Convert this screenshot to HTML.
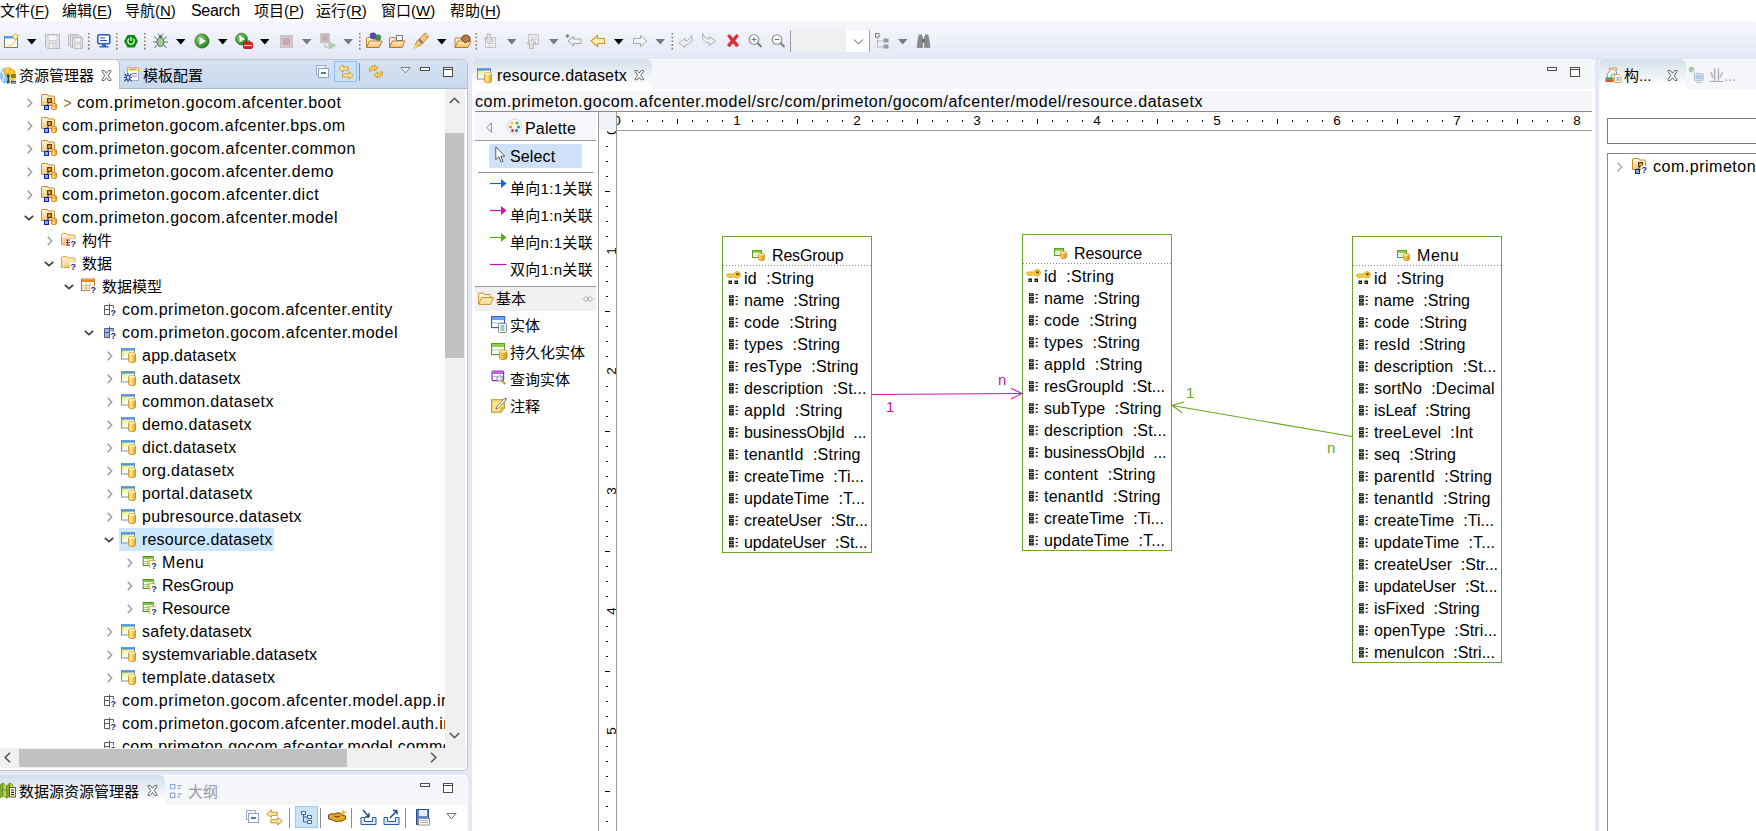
<!DOCTYPE html>
<html><head><meta charset="utf-8"><title>IDE</title>
<style>
*{box-sizing:border-box;margin:0;padding:0}
html,body{width:1756px;height:831px;overflow:hidden;background:#e4e8f6}
body{position:relative;font-family:"Liberation Sans","Noto Sans CJK SC",sans-serif;font-size:16px;letter-spacing:.5px;color:#000;line-height:23px}
.abs,.abs-c>*{position:absolute}
.cj{font-size:15px;letter-spacing:0}
svg{position:absolute;overflow:visible}
#menu{position:absolute;left:0;top:0;width:1756px;height:21px;background:#fff;white-space:nowrap}
#menu span{position:absolute;top:-1px;font-size:15px;letter-spacing:0;line-height:23px}
#menu u{text-decoration:underline;text-underline-offset:2px}
#tb{position:absolute;left:0;top:21px;width:1756px;height:39px;background:linear-gradient(#f6f7fc,#f1f3fa 30%,#e3e7f5)}
.panel{position:absolute;background:#fff;overflow:hidden}
.tree{position:absolute;overflow:hidden;background:#fff}
.tree .r{position:absolute;left:0;right:0;height:23px;white-space:nowrap;line-height:24px}
.tree .r span{position:absolute;top:0}
.tree .r .ar{top:7.300px}
.tree .r .ic{top:3px}
.tree .r .sel{position:absolute;top:0;height:23px;background:#cce8ff}
.tabtxt{position:absolute;font-size:15px;letter-spacing:0;line-height:22px;white-space:nowrap}
.ent{position:absolute;width:150px;border:1px solid #6da52a;background:#fff}
.ent span{position:absolute;white-space:pre;line-height:22px}
.ent .ea{left:21px;letter-spacing:.45px}
.ent .dot{position:absolute;left:0;right:0;top:28px;height:1px;background:repeating-linear-gradient(90deg,#8a8a8a 0 1px,transparent 1px 3px)}
.lb{position:absolute;font-size:15px;letter-spacing:0;line-height:22px}
</style></head><body>
<svg width="0" height="0" style="position:absolute"><defs>
<linearGradient id="gfold" x1="0" y1="0" x2="0" y2="1"><stop offset="0" stop-color="#fff6dc"/><stop offset="1" stop-color="#f3c878"/></linearGradient>
<linearGradient id="gcyl" x1="0" y1="0" x2="1" y2="0"><stop offset="0" stop-color="#fbd77a"/><stop offset="1" stop-color="#e08e12"/></linearGradient>
<linearGradient id="gcyl2" x1="0" y1="0" x2="1" y2="0"><stop offset="0" stop-color="#f0a020"/><stop offset=".45" stop-color="#ffeebc"/><stop offset="1" stop-color="#e08a10"/></linearGradient>
<linearGradient id="gwin" x1="0" y1="0" x2=".7" y2="1"><stop offset="0" stop-color="#c4ec3c"/><stop offset=".7" stop-color="#ffffff"/></linearGradient><linearGradient id="gcyl3" x1="0" y1="0" x2="1" y2="0"><stop offset="0" stop-color="#f8c838"/><stop offset=".35" stop-color="#fde9a0"/><stop offset="1" stop-color="#e49a08"/></linearGradient>
<symbol id="i-proj" viewBox="0 0 16 16"><path d="M.5 11.500V2Q.5 .5 2 .5H6Q7 .5 7.500 2H12.500Q13.500 2 13.500 3V11.500z" fill="url(#gfold)" stroke="#c98a2b"/><rect x="6" y="4" width="5" height="5" fill="#5a3a20"/><rect x="7.200" y="5.200" width="2.600" height="2.600" fill="#e8b030"/><path d="M7.500 9L6.500 11" stroke="#3a2a5a" stroke-width="1"/><rect x="3.500" y="11.500" width="4" height="4" fill="#7ab8d8" stroke="#1b1f9a"/><rect x="10.500" y="9.500" width="5" height="6" rx="1.500" fill="url(#gcyl2)" stroke="#d8860e" stroke-width=".9"/><path d="M10.800 11.500Q13 12.500 15.200 11.500" fill="none" stroke="#d8860e" stroke-width=".7"/></symbol>
<symbol id="i-projq" viewBox="0 0 16 16"><path d="M.5 11.500V2Q.5 .5 2 .5H6Q7 .5 7.500 2H12.500Q13.500 2 13.500 3V11.500z" fill="url(#gfold)" stroke="#c98a2b"/><rect x="6" y="4" width="5" height="5" fill="#5a3a20"/><rect x="7.200" y="5.200" width="2.600" height="2.600" fill="#e8b030"/><path d="M7.500 9L6.500 11" stroke="#3a2a5a" stroke-width="1"/><rect x="3.500" y="11.500" width="4" height="4" fill="#7ab8d8" stroke="#1b1f9a"/><rect x="9" y="7.500" width="7" height="8" fill="#fff"/><text x="9.600" y="14.600" font-family="Liberation Sans,sans-serif" font-size="9" font-weight="bold" fill="#1c1c8c" letter-spacing="0">?</text></symbol>
<symbol id="i-fq1" viewBox="0 0 16 16"><path d="M.5 12.5V3.5q0-2 2-2h3l1.5 1.5h6q1 0 1 1V12.5z" fill="url(#gfold)" stroke="#d3a24a"/><path d="M4 6.5h10v7H4z" fill="#fff8e6" stroke="#d9b56a" stroke-width=".6"/><path d="M5 8h4M5 10.5h4M6.5 8v5M5 13h4" stroke="#b01d2e" fill="none"/><rect x="9" y="7.500" width="7" height="8" fill="#fff"/><text x="9.600" y="14.600" font-family="Liberation Sans,sans-serif" font-size="9" font-weight="bold" fill="#1c1c8c" letter-spacing="0">?</text></symbol>
<symbol id="i-fq2" viewBox="0 0 16 16"><path d="M.5 12.5V3.5q0-2 2-2h3l1.5 1.5h6q1 0 1 1V12.5z" fill="url(#gfold)" stroke="#d3a24a"/><path d="M2.5 13V6.5q0-1 1-1h10.5" fill="none" stroke="#f8e2a6"/><rect x="9" y="7.500" width="7" height="8" fill="#fff"/><text x="9.600" y="14.600" font-family="Liberation Sans,sans-serif" font-size="9" font-weight="bold" fill="#1c1c8c" letter-spacing="0">?</text></symbol>
<symbol id="i-dm" viewBox="0 0 16 16"><rect x=".5" y="1" width="13" height="11.500" fill="#fffdf0" stroke="#b8863a"/><rect x="1" y="1.500" width="12" height="2.500" fill="#e08a2b"/><path d="M1 7.5h12M1 10h12M5 4.5v8M9 4.5v8" stroke="#c9a76a" stroke-width=".8" fill="none"/><rect x="9" y="7.500" width="7" height="8" fill="#fff"/><text x="9.600" y="14.600" font-family="Liberation Sans,sans-serif" font-size="9" font-weight="bold" fill="#1c1c8c" letter-spacing="0">?</text></symbol>
<symbol id="i-pk1" viewBox="0 0 16 16"><path d="M3.500 4.500h9v9h-9zM8.500 2.500V14.500M3.500 8.500h9" fill="none" stroke="#5c5c5c"/><rect x="9" y="7.500" width="7" height="8" fill="#fff"/><text x="9.600" y="14.600" font-family="Liberation Sans,sans-serif" font-size="9" font-weight="bold" fill="#1c1c8c" letter-spacing="0">?</text></symbol>
<symbol id="i-pk2" viewBox="0 0 16 16"><path d="M3.500 4.500h9v9h-9z" fill="#9fb6d8"/><path d="M3.500 4.500h9v9h-9zM8.500 2.500V14.500M3.500 8.500h9" fill="none" stroke="#4a5f86"/><rect x="9" y="7.500" width="7" height="8" fill="#fff"/><text x="9.600" y="14.600" font-family="Liberation Sans,sans-serif" font-size="9" font-weight="bold" fill="#1c1c8c" letter-spacing="0">?</text></symbol>
<symbol id="i-ds" viewBox="0 0 16 16"><rect x=".5" y="1.500" width="13" height="10.500" fill="url(#gwin)" stroke="#8e8e8e"/><rect x=".5" y="1" width="13" height="2.500" fill="#4a86d4"/><path d="M1 1.800h12" stroke="#8cc0f0" stroke-width=".7"/><rect x="7.500" y="5.500" width="7" height="10" rx="2" fill="url(#gcyl3)" stroke="#c88a14" stroke-width=".8"/><ellipse cx="11" cy="6.800" rx="3.200" ry="1.200" fill="#fdeeb4"/></symbol>
<symbol id="i-en" viewBox="-.7 0 16 16"><rect x="1.5" y="2.5" width="10" height="9" fill="#fbfff0" stroke="#4b8a1f"/><rect x="2" y="3" width="9" height="2" fill="#7cc142"/><path d="M2 7.5h9M2 9.5h9M6 5v6" stroke="#8bbf5a" stroke-width=".8" fill="none"/><path d="M7.500 6.500H13.500V13H7.500z" fill="#fdeeb8" stroke="#d8a030" stroke-width=".8"/><rect x="9" y="7.500" width="7" height="8" fill="#fff"/><text x="9.600" y="14.600" font-family="Liberation Sans,sans-serif" font-size="9" font-weight="bold" fill="#1c1c8c" letter-spacing="0">?</text></symbol>
<symbol id="i-x" viewBox="0 0 10 10"><path d="M1 .5L3 .5L5 3L7 .5L9 .5L9 1.5L6.5 5L9 8.5L9 9.5L7 9.5L5 7L3 9.5L1 9.5L1 8.5L3.5 5L1 1.5z" fill="#fff" stroke="#5a5a5a" stroke-width=".9"/></symbol>
<symbol id="i-min" viewBox="0 0 10 4"><rect x=".5" y=".5" width="9" height="3" fill="#fff" stroke="#4a4a4a"/></symbol>
<symbol id="i-max" viewBox="0 0 10 10"><rect x=".5" y=".5" width="9" height="9" fill="#fff" stroke="#4a4a4a"/><path d="M.5 2.5h9" stroke="#4a4a4a"/></symbol>
<symbol id="i-pent" viewBox="0 0 13 11"><rect x=".5" y=".5" width="9" height="7" fill="#fbfff2" stroke="#5aa02a"/><rect x="1" y="1" width="8" height="2" fill="#8fd04a"/><path d="M1 5h8" stroke="#b3dc8c" stroke-width=".8"/><rect x="6.500" y="3.500" width="6" height="7" rx="2" fill="url(#gcyl)" stroke="#d08a12" stroke-width=".8"/><ellipse cx="9.500" cy="4.800" rx="2.500" ry="1" fill="#fde7a6"/></symbol>
<symbol id="i-attr" viewBox="0 0 10 11"><path d="M0 .2h4.800v3h-4.800zM0 3.900h4.800v3h-4.800zM0 7.600h4.800v3h-4.800z" fill="#161616"/><path d="M1.400 1.200h2v1h-2zM1.400 4.900h2v1h-2zM1.400 8.600h2v1h-2z" fill="#8ad86a"/><path d="M6.600 1.700h2.200M6.600 5.400h2.200M6.600 9.100h2.200" stroke="#161616" stroke-width="1.200"/></symbol>
<symbol id="i-key" viewBox="0 0 15 14"><path d="M.5 4.500Q.5 3 2 3H8Q8.500 .5 11.500 .5Q14.500 1 14.500 4Q14 7 11 7Q9 7 8.300 5.800H6.500L5.500 7L4.500 5.800L3.500 7L2 5.800Q.5 5.800 .5 4.500z" fill="#f5d23a" stroke="#c9a01a" stroke-width=".8"/><circle cx="11.500" cy="3.300" r="1.300" fill="#7a4a12"/><path d="M2.500 9.500h3.500v3.500h-3.500zM8.500 9.500h3.500v3.500h-3.500z" fill="#1a1a1a"/><path d="M3.500 11h1.500v1h-1.500zM9.500 11h1.500v1h-1.500z" fill="#7ac85a"/></symbol>
</defs></svg>

<div id="menu">
<span style="left:0">文件(<u>F</u>)</span><span style="left:62px">编辑(<u>E</u>)</span><span style="left:125px">导航(<u>N</u>)</span><span style="left:191px;font-size:16px;letter-spacing:-.3px">Search</span><span style="left:254px">项目(<u>P</u>)</span><span style="left:316px">运行(<u>R</u>)</span><span style="left:381px">窗口(<u>W</u>)</span><span style="left:450px">帮助(<u>H</u>)</span>
</div>
<div id="tb">
<svg style="left:0;top:0" width="1000" height="39" viewBox="0 21 1000 39">
<defs>
<g id="dd"><path d="M0 0h9.500L4.750 5.500z"/></g>
<g id="sep"><path d="M0 0h1.600v1.600H0zM0 3.700h1.600v1.600H0zM0 7.400h1.600v1.600H0zM0 11.100h1.600v1.600H0zM0 14.800h1.600v1.600H0z" fill="#8a7a5c"/></g>
<radialGradient id="gplay" cx=".35" cy=".3" r=".8"><stop offset="0" stop-color="#8ad06a"/><stop offset="1" stop-color="#1f7a1f"/></radialGradient>
<linearGradient id="gof" x1="0" y1="0" x2="0" y2="1"><stop offset="0" stop-color="#fdf0c8"/><stop offset="1" stop-color="#f0c070"/></linearGradient>
</defs>
<!-- new -->
<rect x="4.500" y="36.500" width="13" height="11" fill="#fcfdff" stroke="#8a7a5a"/><rect x="4.500" y="36" width="13" height="2.500" fill="#5a9ae8"/><path d="M7 46Q14 46 16 39" fill="none" stroke="#f4dc9a" stroke-width="1.500"/><path d="M15.500 33.500L17 35.500L19 36L17 37.500L15.500 40L14 37.500L12 36L14 35.500z" fill="#fdf6c8" stroke="#d8a828" stroke-width=".9"/>
<use href="#dd" x="27" y="39" fill="#000"/>
<!-- save -->
<path d="M45.500 34.500H59.500V48.500H47.500L45.500 46.500z" fill="#e4e4e4" stroke="#b8b8b8"/><rect x="48" y="35" width="9" height="5.500" fill="#f4f4f4" stroke="#c4c4c4" stroke-width=".7"/><rect x="49" y="43" width="7" height="5.500" fill="#eee" stroke="#bcbcbc" stroke-width=".8"/><path d="M53 44.500v3" stroke="#bcbcbc"/>
<!-- save all -->
<path d="M68.500 34.500H78.500V45.500H68.500z" fill="#e8e8e8" stroke="#bcbcbc"/><path d="M70.500 36H80.500V47H70.500z" fill="#e8e8e8" stroke="#bcbcbc"/><path d="M72.500 37.500H82.500V48.500H74L72.500 47z" fill="#e4e4e4" stroke="#b8b8b8"/><rect x="74.500" y="38" width="6" height="4" fill="#f4f4f4" stroke="#c4c4c4" stroke-width=".7"/><rect x="75" y="44" width="5.500" height="4.500" fill="#eee" stroke="#bcbcbc" stroke-width=".8"/>
<use href="#sep" x="88" y="33"/>
<!-- monitor -->
<rect x="97.800" y="34.800" width="12" height="9" rx="1.500" fill="#fff" stroke="#2a5ab8" stroke-width="1.600"/><path d="M100 38h5M100 40.500h7" stroke="#2a5ab8" stroke-width="1.200"/><path d="M102 44.500h4v1.500h-4z" fill="#2a5ab8"/><path d="M99.500 46.800h9" stroke="#2a5ab8" stroke-width="1.400"/>
<use href="#sep" x="116" y="33"/>
<!-- power -->
<path d="M127.500 35L134.500 35L138 41.200L134.500 47.500L127.500 47.500L124 41.200z" fill="#0f8a0f"/><path d="M128.800 38.800A3.200 3.200 0 1 0 133.200 38.800" fill="none" stroke="#fff" stroke-width="1.200"/><path d="M131 37v4" stroke="#fff" stroke-width="1.200"/>
<use href="#sep" x="144" y="33"/>
<!-- bug -->
<ellipse cx="160.500" cy="42" rx="3.300" ry="4.500" fill="#a8c89a" stroke="#3a6a5a" stroke-width=".9"/><circle cx="160.500" cy="36.800" r="1.800" fill="#4a7a6a"/><path d="M157.500 39.500L154 36.500M163.500 39.500L167 36.500M157 42H153M164 42H168M157.500 44.500L154.500 48M163.500 44.500L166.500 48M159.500 35.500L158 33.500M161.500 35.500L163 33.500" stroke="#3a6a5a" stroke-width=".9" fill="none"/>
<use href="#dd" x="176" y="39" fill="#000"/>
<!-- run -->
<circle cx="202" cy="41" r="7" fill="url(#gplay)" stroke="#1f6a1f" stroke-width=".8"/><path d="M199.500 37L206 41L199.500 45z" fill="#fff"/>
<use href="#dd" x="218" y="39" fill="#000"/>
<!-- run ext -->
<circle cx="241.500" cy="39" r="5.800" fill="url(#gplay)" stroke="#1f6a1f" stroke-width=".8"/><path d="M239.500 35.500L245 39L239.500 42.500z" fill="#fff"/><rect x="243.500" y="42.500" width="9" height="6" rx="1" fill="#e0241a" stroke="#a01208" stroke-width=".8"/><path d="M246 42.500v-1.500h4v1.500" fill="none" stroke="#a01208"/><path d="M244 45.500h8" stroke="#fff" stroke-width=".8"/>
<use href="#dd" x="260" y="39" fill="#000"/>
<!-- stop gray -->
<rect x="280.500" y="35.500" width="12" height="12" fill="#d8c4c8" stroke="#c4c4c4"/><rect x="283" y="38" width="7" height="7" fill="#c8a8b0"/>
<use href="#dd" x="302" y="39" fill="#7a7a7a"/>
<!-- gray icon -->
<rect x="320.500" y="33.500" width="9" height="9" fill="#d4bcc4" stroke="#c4c4c4"/><rect x="322.500" y="35.500" width="5" height="5" fill="#c8a8b0"/><path d="M329 42L335.500 45.500L329 49z" fill="#b4d0b4" stroke="#a8bca8" stroke-width=".7"/><path d="M325 43v4h3" fill="none" stroke="#bcbcbc"/>
<use href="#dd" x="343.500" y="39" fill="#7a7a7a"/>
<use href="#sep" x="359" y="33"/>
<!-- open folder 1 -->
<path d="M366.500 47.500V38.500q0-1 1-1h4l1 1.500h6q1 0 1 1V41" fill="#fdf0c8" stroke="#b8782a"/><path d="M366.500 47.500L369.500 41H382L379 47.500z" fill="url(#gof)" stroke="#b8782a"/><circle cx="373" cy="35.800" r="3" fill="#5a4ab8" stroke="#3a2a8a" stroke-width=".6"/><circle cx="378" cy="37.500" r="2.800" fill="#3a9a4a" stroke="#1a6a2a" stroke-width=".6"/>
<!-- open folder 2 -->
<path d="M389.500 47.500V38.500q0-1 1-1h4l1 1.500h6q1 0 1 1V41" fill="#fdf0c8" stroke="#b8782a"/><rect x="396.500" y="35.500" width="6" height="5" fill="#fff" stroke="#6a7aa8"/><path d="M389.500 47.500L392.500 41H405L402 47.500z" fill="url(#gof)" stroke="#b8782a"/>
<!-- pen -->
<path d="M414 48L417 41L424 34L428 37.500L421 45z" fill="#f4c878" stroke="#b8782a" stroke-width=".8"/><path d="M419 39.500L422.500 43" stroke="#7a7a8a" stroke-width="2.400"/><path d="M413.500 48.500L415 45L417.500 47z" fill="#fdf4a8" stroke="#e8d048" stroke-width=".8"/><path d="M424 34L426 33L428.500 35.500L428 37.500z" fill="#fdf0c8" stroke="#b8782a" stroke-width=".7"/>
<use href="#dd" x="437" y="39" fill="#000"/>
<!-- folder brown -->
<path d="M455 47.500V39q0-1 1-1h4l1 1.500h7q1 0 1 1V41" fill="#fdf0c8" stroke="#b8782a"/><path d="M455 47.500L458 41H471L468 47.500z" fill="url(#gof)" stroke="#b8782a"/><path d="M461 39Q462 34.500 467 35Q471 36 470 40.500L465 43z" fill="#a86a3a" stroke="#6a3a1a" stroke-width=".7"/><path d="M463 39L468 37M464 41L469 39" stroke="#d8a878" stroke-width=".7"/>
<use href="#sep" x="475.500" y="33"/>
<!-- gray down doc -->
<rect x="485.500" y="37.500" width="10" height="10" fill="#eee" stroke="#c4c4c4"/><path d="M488 41h6M488 43.500h6M488 46h4" stroke="#c8c8c8" stroke-width=".9"/><path d="M487 34v5h-2.500L489 44L493 39H490.500V34z" fill="#e0e0e0" stroke="#b0b0b0" stroke-width=".8"/>
<use href="#dd" x="507" y="39" fill="#7a7a7a"/>
<rect x="528.500" y="34.500" width="10" height="10" fill="#eee" stroke="#c4c4c4"/><path d="M531 37h6M531 39.500h6M531 42h4" stroke="#c8c8c8" stroke-width=".9"/><path d="M529.500 48.500v-5H527L531.500 38.500L536 43.500H533.500V48.500z" fill="#e0e0e0" stroke="#b0b0b0" stroke-width=".8"/>
<use href="#dd" x="549" y="39" fill="#7a7a7a"/>
<!-- last edit -->
<path d="M568 41L573.500 36.500V39H581V43.500H573.500V46z" fill="#f0f0f0" stroke="#9a9a9a" stroke-width=".9"/><path d="M566 34.500l3 3M569 34.500l-3 3M567.500 34v4M565.500 36h4" stroke="#6a6a6a" stroke-width=".7"/>
<!-- back -->
<path d="M591 41L597.500 35.500V38.500H604.500V43.500H597.500V46.500z" fill="#fdf0b8" stroke="#d8981a" stroke-width="1.100"/>
<use href="#dd" x="614" y="39" fill="#000"/>
<path d="M647 41L640.500 35.500V38.500H633.500V43.500H640.500V46.500z" fill="#f4f4f4" stroke="#a8a8a8" stroke-width="1"/>
<use href="#dd" x="655.500" y="39" fill="#7a7a7a"/>
<use href="#sep" x="671.500" y="33"/>
<!-- undo/redo gray -->
<path d="M679 43L685 38.500V41Q690.500 40.500 691.500 35Q694.500 43.500 685 45V47.500z" fill="#f0f0f0" stroke="#a8a8a8" stroke-width=".9"/>
<path d="M715.500 41L709.500 36.500V39Q704 38.500 703 33.500Q700 41.500 709.500 43V45.500z" fill="#f0f0f0" stroke="#a8a8a8" stroke-width=".9"/>
<!-- red X -->
<path d="M727.500 36L729.500 34.500L733 38.500L736.500 34.500L738.500 36L735 40.500L738.500 45L736.500 47L733 43L729.500 47L727.500 45L731 40.500z" fill="#e03038" stroke="#c8202a" stroke-width=".7"/>
<!-- zoom in/out -->
<circle cx="754" cy="39.500" r="4.800" fill="#fff" stroke="#8a8a8a" stroke-width="1.100"/><path d="M751.500 39.500h5M754 37v5" stroke="#6a6a6a" stroke-width=".9"/><path d="M757.500 43L761.500 47" stroke="#7a7a7a" stroke-width="1.800"/>
<circle cx="777" cy="39.500" r="4.800" fill="#fff" stroke="#8a8a8a" stroke-width="1.100"/><path d="M774.500 39.500h5" stroke="#6a6a6a" stroke-width=".9"/><path d="M780.500 43L784.500 47" stroke="#7a7a7a" stroke-width="1.800"/>
<path d="M790.500 30V52M869.500 30V52" stroke="#a0a0a0"/>
<rect x="792" y="30" width="54" height="22" fill="#f0f0f0"/><rect x="846" y="30" width="23" height="22" fill="#fff"/><path d="M854 39.500L858.500 44L863 39.500" fill="none" stroke="#5a5a5a" stroke-width="1"/>
<!-- tree layout -->
<rect x="875.500" y="33.500" width="3.500" height="3.500" fill="#fff" stroke="#7a7a7a"/><path d="M877.500 38v9M877.500 41h6M877.500 47h6" fill="none" stroke="#8a8a8a" stroke-dasharray="1 1"/><rect x="883.500" y="38.500" width="5" height="4" fill="#9a9a9a"/><rect x="883.500" y="44.500" width="5" height="4" fill="#9a9a9a"/>
<use href="#dd" x="898" y="39" fill="#7a7a7a"/>
<!-- binoculars -->
<path d="M918.500 36.500h3.500v-2h-3zM925 36.500h3.500l-.5-2h-3z" fill="#8a8a8a"/><path d="M917 47.500L918.500 36.500H922.500V47.500zM930 47.500L928.500 36.500H924.500V47.500z" fill="#8a8a8a" stroke="#7a7a7a" stroke-width=".6"/><rect x="922" y="39" width="3" height="3.500" fill="#6a6a6a"/>
</svg>


</div>
<div class="panel" style="left:0;top:59px;width:468px;height:712px;border-radius:0 6px 5px 0;border:1px solid #c2c4c8;border-left:0;background:#fff">
 <div class="abs" style="left:0;top:0;width:467px;height:29px;background:linear-gradient(#d6e2f2,#c9d9ed);border-bottom:1px solid #a9b9d3"></div>
 <div class="abs" style="left:0;top:0;width:120px;height:30px;background:#fff;border-radius:0 5px 0 0;border-right:1px solid #b7c3d8"></div>
 <svg style="left:0;top:7px" width="16" height="17" viewBox="0 0 16 17"><defs><radialGradient id="gorb" cx=".4" cy=".35" r=".7"><stop offset="0" stop-color="#ffe24a"/><stop offset="1" stop-color="#f08a0a"/></radialGradient></defs><ellipse cx="5.500" cy="8.500" rx="5.500" ry="8" fill="#8cc4ee"/><path d="M2 4Q5 8 3 14" fill="none" stroke="#dceefb" stroke-width="1.600"/><circle cx="8.500" cy="4.800" r="4.600" fill="url(#gorb)"/><circle cx="11.800" cy="6" r="3.600" fill="url(#gorb)"/><rect x="9.500" y="6.500" width="6" height="6.500" fill="#fbd21a"/><path d="M11 13L10 16L13 14z" fill="#f07a1a"/><rect x="7" y="7.500" width="2.600" height="2.600" fill="#1a3466"/><rect x="7.800" y="8.300" width="1" height="1" fill="#3a8ad8"/><path d="M8.300 10v4" stroke="#14284a" stroke-width="1.100"/><rect x="7" y="13.800" width="2.600" height="2.600" fill="#2a3a3a"/><rect x="7.800" y="14.600" width="1" height="1" fill="#4ab84a"/><path d="M11 8h5M11 10h5M11 14.300h5M11 16h5" stroke="#14284a" stroke-width="1"/></svg>
 <span class="tabtxt" style="left:19px;top:5px">资源管理器</span>
 <svg style="left:101px;top:9.500px" width="11" height="11"><use href="#i-x"/></svg>
 <svg style="left:124px;top:6px" width="16" height="17" viewBox="0 0 16 17"><rect x="3.500" y="1.500" width="11" height="13" fill="#fdfdff" stroke="#a8b0c8"/><path d="M3.500 5V1.500H14.500V5" fill="#fbe9a0" stroke="#e0b040"/><path d="M5.500 3.300h7" stroke="#8a86c8" stroke-width="1"/><path d="M8 7.500h5M8 10h5" stroke="#6a76c9" stroke-width=".9"/><path d="M.5 8l7 7M7.500 8l-7 7M4 7v9M0 11.500h8" stroke="#1f3a8a" stroke-width="1.100"/><circle cx="4" cy="11.500" r="1.200" fill="#fff"/></svg>
 <span class="tabtxt" style="left:143px;top:5px">模板配置</span>
 <!-- header toolbar -->
 <svg style="left:316px;top:5px" width="14" height="14" viewBox="0 0 14 14"><rect x=".5" y=".5" width="9" height="9" fill="#f4f7fc" stroke="#9db0cc"/><rect x="2.5" y="3.5" width="10" height="9" fill="#fff" stroke="#8fa3c2"/><path d="M5 8h5" stroke="#1d4f9a" stroke-width="1.4"/></svg>
 <div class="abs" style="left:334px;top:1px;width:23px;height:21px;background:#cbe3fa;border:1px solid #8ec0f2"></div>
 <svg style="left:338px;top:4px" width="16" height="16" viewBox="0 0 16 16"><path d="M.8 4.5L5 .8V3h5.5v3H5v2.2z" fill="#fde9a6" stroke="#c8901c" stroke-width=".9"/><path d="M15.2 11.5L11 7.8V10H4.5v3H11v2.2z" fill="#fde9a6" stroke="#c8901c" stroke-width=".9"/></svg>
 <div class="abs" style="left:359px;top:3px;width:1px;height:18px;background:#8e8e8e"></div>
 <svg style="left:368px;top:4px" width="16" height="16" viewBox="0 0 16 16"><path d="M1 6.5Q2 1.5 6.5 2.5V1l3.5 3-3.5 3V5Q3.5 4.5 3 7.5z" fill="#fbd55c" stroke="#c58a12" stroke-width=".8"/><path d="M15 8.5Q14 13.5 9.500 12.5V14L6 11l3.500-3v2Q12.500 10.500 13 7.500z" fill="#fbd55c" stroke="#c58a12" stroke-width=".8"/></svg>
 <svg style="left:400px;top:7px" width="11" height="7" viewBox="0 0 11 7"><path d="M.8 .5h9.400L5.500 5.800z" fill="#fff" stroke="#6a6a6a" stroke-width=".9"/></svg>
 <svg style="left:420px;top:7px" width="10" height="4"><use href="#i-min"/></svg>
 <svg style="left:443px;top:7px" width="10" height="10"><use href="#i-max"/></svg>
 <!-- tree -->
 <div class="tree" style="left:0;top:29px;width:445px;height:659px">
<div class="r" style="top:2px"><svg class="ar" style="left:26.5px" width="6" height="10" viewBox="0 0 6 10"><path d="M.8 .8 L4.600 5 L.8 9.200" fill="none" stroke="#a0a0a0" stroke-width="1.600"/></svg><svg class="ic" style="left:41px" width="16" height="16"><use href="#i-proj"/></svg><span style="left:63.5px;color:#8a6a2c;font-size:14px">&gt;</span><span style="left:77px;letter-spacing:0.569px">com.primeton.gocom.afcenter.boot</span></div>
<div class="r" style="top:25px"><svg class="ar" style="left:26.5px" width="6" height="10" viewBox="0 0 6 10"><path d="M.8 .8 L4.600 5 L.8 9.200" fill="none" stroke="#a0a0a0" stroke-width="1.600"/></svg><svg class="ic" style="left:41px" width="16" height="16"><use href="#i-proj"/></svg><span style="left:62px;letter-spacing:0.47px">com.primeton.gocom.afcenter.bps.om</span></div>
<div class="r" style="top:48px"><svg class="ar" style="left:26.5px" width="6" height="10" viewBox="0 0 6 10"><path d="M.8 .8 L4.600 5 L.8 9.200" fill="none" stroke="#a0a0a0" stroke-width="1.600"/></svg><svg class="ic" style="left:41px" width="16" height="16"><use href="#i-proj"/></svg><span style="left:62px;letter-spacing:0.51px">com.primeton.gocom.afcenter.common</span></div>
<div class="r" style="top:71px"><svg class="ar" style="left:26.5px" width="6" height="10" viewBox="0 0 6 10"><path d="M.8 .8 L4.600 5 L.8 9.200" fill="none" stroke="#a0a0a0" stroke-width="1.600"/></svg><svg class="ic" style="left:41px" width="16" height="16"><use href="#i-proj"/></svg><span style="left:62px;letter-spacing:0.521px">com.primeton.gocom.afcenter.demo</span></div>
<div class="r" style="top:94px"><svg class="ar" style="left:26.5px" width="6" height="10" viewBox="0 0 6 10"><path d="M.8 .8 L4.600 5 L.8 9.200" fill="none" stroke="#a0a0a0" stroke-width="1.600"/></svg><svg class="ic" style="left:41px" width="16" height="16"><use href="#i-proj"/></svg><span style="left:62px;letter-spacing:0.535px">com.primeton.gocom.afcenter.dict</span></div>
<div class="r" style="top:117px"><svg class="ar" style="left:24px;top:9.300px" width="10" height="6" viewBox="0 0 10 6"><path d="M.8 .8 L5 4.600 L9.200 .8" fill="none" stroke="#3c3c3c" stroke-width="1.600"/></svg><svg class="ic" style="left:41px" width="16" height="16"><use href="#i-proj"/></svg><span style="left:62px;letter-spacing:0.522px">com.primeton.gocom.afcenter.model</span></div>
<div class="r" style="top:140px"><svg class="ar" style="left:46.5px" width="6" height="10" viewBox="0 0 6 10"><path d="M.8 .8 L4.600 5 L.8 9.200" fill="none" stroke="#a0a0a0" stroke-width="1.600"/></svg><svg class="ic" style="left:61px" width="16" height="16"><use href="#i-fq1"/></svg><span class="cj" style="left:82px">构件</span></div>
<div class="r" style="top:163px"><svg class="ar" style="left:44px;top:9.300px" width="10" height="6" viewBox="0 0 10 6"><path d="M.8 .8 L5 4.600 L9.200 .8" fill="none" stroke="#3c3c3c" stroke-width="1.600"/></svg><svg class="ic" style="left:61px" width="16" height="16"><use href="#i-fq2"/></svg><span class="cj" style="left:82px">数据</span></div>
<div class="r" style="top:186px"><svg class="ar" style="left:64px;top:9.300px" width="10" height="6" viewBox="0 0 10 6"><path d="M.8 .8 L5 4.600 L9.200 .8" fill="none" stroke="#3c3c3c" stroke-width="1.600"/></svg><svg class="ic" style="left:81px" width="16" height="16"><use href="#i-dm"/></svg><span class="cj" style="left:102px">数据模型</span></div>
<div class="r" style="top:209px"><svg class="ic" style="left:101px" width="16" height="16"><use href="#i-pk1"/></svg><span style="left:122px;letter-spacing:0.507px">com.primeton.gocom.afcenter.entity</span></div>
<div class="r" style="top:232px"><svg class="ar" style="left:84px;top:9.300px" width="10" height="6" viewBox="0 0 10 6"><path d="M.8 .8 L5 4.600 L9.200 .8" fill="none" stroke="#3c3c3c" stroke-width="1.600"/></svg><svg class="ic" style="left:101px" width="16" height="16"><use href="#i-pk2"/></svg><span style="left:122px;letter-spacing:0.522px">com.primeton.gocom.afcenter.model</span></div>
<div class="r" style="top:255px"><svg class="ar" style="left:106.5px" width="6" height="10" viewBox="0 0 6 10"><path d="M.8 .8 L4.600 5 L.8 9.200" fill="none" stroke="#a0a0a0" stroke-width="1.600"/></svg><svg class="ic" style="left:121px" width="16" height="16"><use href="#i-ds"/></svg><span style="left:142px;letter-spacing:0.234px">app.datasetx</span></div>
<div class="r" style="top:278px"><svg class="ar" style="left:106.5px" width="6" height="10" viewBox="0 0 6 10"><path d="M.8 .8 L4.600 5 L.8 9.200" fill="none" stroke="#a0a0a0" stroke-width="1.600"/></svg><svg class="ic" style="left:121px" width="16" height="16"><use href="#i-ds"/></svg><span style="left:142px;letter-spacing:0.21px">auth.datasetx</span></div>
<div class="r" style="top:301px"><svg class="ar" style="left:106.5px" width="6" height="10" viewBox="0 0 6 10"><path d="M.8 .8 L4.600 5 L.8 9.200" fill="none" stroke="#a0a0a0" stroke-width="1.600"/></svg><svg class="ic" style="left:121px" width="16" height="16"><use href="#i-ds"/></svg><span style="left:142px;letter-spacing:0.366px">common.datasetx</span></div>
<div class="r" style="top:324px"><svg class="ar" style="left:106.5px" width="6" height="10" viewBox="0 0 6 10"><path d="M.8 .8 L4.600 5 L.8 9.200" fill="none" stroke="#a0a0a0" stroke-width="1.600"/></svg><svg class="ic" style="left:121px" width="16" height="16"><use href="#i-ds"/></svg><span style="left:142px;letter-spacing:0.387px">demo.datasetx</span></div>
<div class="r" style="top:347px"><svg class="ar" style="left:106.5px" width="6" height="10" viewBox="0 0 6 10"><path d="M.8 .8 L4.600 5 L.8 9.200" fill="none" stroke="#a0a0a0" stroke-width="1.600"/></svg><svg class="ic" style="left:121px" width="16" height="16"><use href="#i-ds"/></svg><span style="left:142px;letter-spacing:0.364px">dict.datasetx</span></div>
<div class="r" style="top:370px"><svg class="ar" style="left:106.5px" width="6" height="10" viewBox="0 0 6 10"><path d="M.8 .8 L4.600 5 L.8 9.200" fill="none" stroke="#a0a0a0" stroke-width="1.600"/></svg><svg class="ic" style="left:121px" width="16" height="16"><use href="#i-ds"/></svg><span style="left:142px;letter-spacing:0.385px">org.datasetx</span></div>
<div class="r" style="top:393px"><svg class="ar" style="left:106.5px" width="6" height="10" viewBox="0 0 6 10"><path d="M.8 .8 L4.600 5 L.8 9.200" fill="none" stroke="#a0a0a0" stroke-width="1.600"/></svg><svg class="ic" style="left:121px" width="16" height="16"><use href="#i-ds"/></svg><span style="left:142px;letter-spacing:0.396px">portal.datasetx</span></div>
<div class="r" style="top:416px"><svg class="ar" style="left:106.5px" width="6" height="10" viewBox="0 0 6 10"><path d="M.8 .8 L4.600 5 L.8 9.200" fill="none" stroke="#a0a0a0" stroke-width="1.600"/></svg><svg class="ic" style="left:121px" width="16" height="16"><use href="#i-ds"/></svg><span style="left:142px;letter-spacing:0.301px">pubresource.datasetx</span></div>
<div class="r" style="top:439px"><i class="sel" style="left:119px;width:155px"></i><svg class="ar" style="left:104px;top:9.300px" width="10" height="6" viewBox="0 0 10 6"><path d="M.8 .8 L5 4.600 L9.200 .8" fill="none" stroke="#3c3c3c" stroke-width="1.600"/></svg><svg class="ic" style="left:121px" width="16" height="16"><use href="#i-ds"/></svg><span style="left:142px;letter-spacing:0.188px">resource.datasetx</span></div>
<div class="r" style="top:462px"><svg class="ar" style="left:126.5px" width="6" height="10" viewBox="0 0 6 10"><path d="M.8 .8 L4.600 5 L.8 9.200" fill="none" stroke="#a0a0a0" stroke-width="1.600"/></svg><svg class="ic" style="left:141px" width="16" height="16"><use href="#i-en"/></svg><span style="left:162px;letter-spacing:0.556px">Menu</span></div>
<div class="r" style="top:485px"><svg class="ar" style="left:126.5px" width="6" height="10" viewBox="0 0 6 10"><path d="M.8 .8 L4.600 5 L.8 9.200" fill="none" stroke="#a0a0a0" stroke-width="1.600"/></svg><svg class="ic" style="left:141px" width="16" height="16"><use href="#i-en"/></svg><span style="left:162px;letter-spacing:-0.175px">ResGroup</span></div>
<div class="r" style="top:508px"><svg class="ar" style="left:126.5px" width="6" height="10" viewBox="0 0 6 10"><path d="M.8 .8 L4.600 5 L.8 9.200" fill="none" stroke="#a0a0a0" stroke-width="1.600"/></svg><svg class="ic" style="left:141px" width="16" height="16"><use href="#i-en"/></svg><span style="left:162px;letter-spacing:-0.041px">Resource</span></div>
<div class="r" style="top:531px"><svg class="ar" style="left:106.5px" width="6" height="10" viewBox="0 0 6 10"><path d="M.8 .8 L4.600 5 L.8 9.200" fill="none" stroke="#a0a0a0" stroke-width="1.600"/></svg><svg class="ic" style="left:121px" width="16" height="16"><use href="#i-ds"/></svg><span style="left:142px;letter-spacing:0.24px">safety.datasetx</span></div>
<div class="r" style="top:554px"><svg class="ar" style="left:106.5px" width="6" height="10" viewBox="0 0 6 10"><path d="M.8 .8 L4.600 5 L.8 9.200" fill="none" stroke="#a0a0a0" stroke-width="1.600"/></svg><svg class="ic" style="left:121px" width="16" height="16"><use href="#i-ds"/></svg><span style="left:142px;letter-spacing:0.153px">systemvariable.datasetx</span></div>
<div class="r" style="top:577px"><svg class="ar" style="left:106.5px" width="6" height="10" viewBox="0 0 6 10"><path d="M.8 .8 L4.600 5 L.8 9.200" fill="none" stroke="#a0a0a0" stroke-width="1.600"/></svg><svg class="ic" style="left:121px" width="16" height="16"><use href="#i-ds"/></svg><span style="left:142px;letter-spacing:0.419px">template.datasetx</span></div>
<div class="r" style="top:600px"><svg class="ic" style="left:101px" width="16" height="16"><use href="#i-pk1"/></svg><span style="left:122px;letter-spacing:0.543px">com.primeton.gocom.afcenter.model.app.impl</span></div>
<div class="r" style="top:623px"><svg class="ic" style="left:101px" width="16" height="16"><use href="#i-pk1"/></svg><span style="left:122px;letter-spacing:0.472px">com.primeton.gocom.afcenter.model.auth.impl</span></div>
<div class="r" style="top:646px"><svg class="ic" style="left:101px" width="16" height="16"><use href="#i-pk1"/></svg><span style="left:122px;letter-spacing:0.369px">com.primeton.gocom.afcenter.model.common</span></div>
 </div>
 <!-- v scrollbar -->
 <div class="abs" style="left:445px;top:29px;width:20px;height:659px;background:#f0f0f0"></div>
 <div class="abs" style="left:445px;top:73px;width:19px;height:225px;background:#c1c1c1"></div>
 <svg style="left:449px;top:37px" width="11" height="7" viewBox="0 0 11 7"><path d="M.8 6L5.500 1.200L10.200 6" fill="none" stroke="#505050" stroke-width="1.500"/></svg>
 <svg style="left:449px;top:672px" width="11" height="7" viewBox="0 0 11 7"><path d="M.8 1L5.500 5.800L10.200 1" fill="none" stroke="#505050" stroke-width="1.500"/></svg>
 <!-- h scrollbar -->
 <div class="abs" style="left:0;top:688px;width:466px;height:20px;background:#f0f0f0"></div>
 <div class="abs" style="left:19px;top:689px;width:328px;height:18px;background:#c1c1c1"></div>
 <svg style="left:4px;top:692px" width="7" height="11" viewBox="0 0 7 11"><path d="M6 .8L1.200 5.500L6 10.200" fill="none" stroke="#505050" stroke-width="1.500"/></svg>
 <svg style="left:430px;top:692px" width="7" height="11" viewBox="0 0 7 11"><path d="M1 .8L5.800 5.500L1 10.200" fill="none" stroke="#505050" stroke-width="1.500"/></svg>
</div>

<div class="panel" style="left:0;top:775px;width:468px;height:56px;border-radius:0 5px 0 0;background:#fff">
 <div class="abs" style="left:0;top:0;width:467px;height:30px;background:#f5f6fa;border-top:1px solid #fff"></div>
 <div class="abs" style="left:0;top:0;width:165px;height:30px;background:linear-gradient(#d3deea,#eef2f8 55%,#fff 90%);border-radius:0 6px 0 0"></div>
 <svg style="left:0;top:7px" width="16" height="16" viewBox="0 0 16 16"><path d="M0 3L3 1V14L0 16z" fill="#8ab82a" stroke="#5a7a12" stroke-width=".6"/><path d="M3 1L6.500 4V16L3 14z" fill="#c8d848" stroke="#5a7a12" stroke-width=".6"/><path d="M6.500 4L10 1V14L6.500 16z" fill="#7ab028" stroke="#5a7a12" stroke-width=".6"/><path d="M10 1L13 3V7H10z" fill="#c8d848" stroke="#5a7a12" stroke-width=".6"/><path d="M1 9Q4 6 6 9" fill="none" stroke="#2a8ac8" stroke-width="1.200"/><rect x="9.500" y="5.500" width="6" height="9.500" fill="#fbf6e4" stroke="#5a4a2a" stroke-width=".9"/><path d="M11 8h3M11 10.300h3M11 12.600h3" stroke="#3a2a12" stroke-width="1.200"/></svg>
 <span class="tabtxt" style="left:19px;top:5.500px">数据源资源管理器</span>
 <svg style="left:147px;top:10px" width="11" height="11"><use href="#i-x"/></svg>
 <svg style="left:170px;top:9px" width="15" height="15" viewBox="0 0 14 14"><path d="M.5 .5h4v4h-4zM.5 8.500h4v4h-4z" fill="#fff" stroke="#8aa6d8"/><path d="M7 1.500h4M7 4h2.500M7 9.500h4M7 12h2.500" stroke="#8aa6d8" stroke-width="1.200"/></svg>
 <span class="tabtxt" style="left:188px;top:5.500px;color:#9a9a9a">大纲</span>
 <svg style="left:420px;top:8px" width="10" height="4"><use href="#i-min"/></svg>
 <svg style="left:443px;top:8px" width="10" height="10"><use href="#i-max"/></svg>
 <!-- toolbar -->
 <svg style="left:246px;top:35px" width="14" height="14" viewBox="0 0 14 14"><rect x=".5" y=".5" width="9" height="9" fill="#f4f7fc" stroke="#9db0cc"/><rect x="2.500" y="3.500" width="10" height="9" fill="#fff" stroke="#8fa3c2"/><path d="M5 8h5" stroke="#1d4f9a" stroke-width="1.400"/></svg>
 <svg style="left:266px;top:34px" width="17" height="17" viewBox="0 0 16 16"><path d="M.8 4.500L5 .8V3h5.500v3H5v2.200z" fill="#fde9a6" stroke="#c8901c" stroke-width=".9"/><path d="M15.200 11.500L11 7.800V10H4.500v3H11v2.200z" fill="#fde9a6" stroke="#c8901c" stroke-width=".9"/></svg>
 <div class="abs" style="left:289px;top:33px;width:1px;height:20px;background:#8e8e8e"></div>
 <div class="abs" style="left:295px;top:31px;width:23px;height:22px;background:#cbe3fa;border:1px solid #9cc8f4"></div>
 <svg style="left:301px;top:36px" width="12" height="13" viewBox="0 0 12 13"><path d="M.5 .5h4v3h-4zM6.500 4.500h4v3h-4zM6.500 9.500h4v3h-4z" fill="#fff" stroke="#2a6aa8"/><path d="M2.500 3.500V11H6.500M2.500 6H6.500" fill="none" stroke="#2a6aa8"/></svg>
 <div class="abs" style="left:320px;top:33px;width:1px;height:20px;background:#8e8e8e"></div>
 <svg style="left:328px;top:35px" width="19" height="14" viewBox="0 0 19 14"><path d="M.5 5Q3 3 6 4L9 3Q12 2 14 5L17.500 6V9Q14 12 11 11Q8 13 5 10L.5 9z" fill="#e8a82a" stroke="#5a3a0a" stroke-width=".9"/><path d="M6 6Q9 8 12 6" fill="none" stroke="#5a3a0a"/><path d="M15.500 0V5M13 2.500H18" stroke="#f0b81a" stroke-width="1.600"/></svg>
 <div class="abs" style="left:351px;top:33px;width:1px;height:20px;background:#8e8e8e"></div>
 <svg style="left:360px;top:34px" width="17" height="17" viewBox="0 0 17 17"><path d="M1 8.500V15.500H16V8.500H12.500V12.500H4.500V8.500z" fill="#dce8f8" stroke="#2a5a9a"/><path d="M3 1L9 8M9 8V4M9 8H5" fill="none" stroke="#1a4a8a" stroke-width="1.400"/></svg>
 <svg style="left:383px;top:34px" width="17" height="17" viewBox="0 0 17 17"><path d="M1 8.500V15.500H16V8.500H12.500V12.500H4.500V8.500z" fill="#dce8f8" stroke="#2a5a9a"/><path d="M7 9L14 1.500M14 1.500V5.500M14 1.500H10" fill="none" stroke="#1a4a8a" stroke-width="1.400"/></svg>
 <div class="abs" style="left:405px;top:33px;width:1px;height:20px;background:#8e8e8e"></div>
 <svg style="left:415px;top:34px" width="16" height="17" viewBox="0 0 16 17"><path d="M1.500 .5H13.500V15.500H1.500z" fill="#5a8ad0" stroke="#2a4a8a"/><rect x="4" y="1" width="8" height="6" fill="#e8eef8"/><rect x="3.500" y="9.500" width="11" height="6.500" fill="#fff" stroke="#7a7a7a" stroke-width=".8"/><path d="M5 11.500h8M5 13.500h8" stroke="#9a9a9a" stroke-width=".8"/></svg>
 <svg style="left:446px;top:38px" width="11" height="7" viewBox="0 0 11 7"><path d="M.8 .5h9.400L5.500 5.800z" fill="#fff" stroke="#6a6a6a" stroke-width=".9"/></svg>
</div>

<div class="panel" style="left:472px;top:60px;width:1123px;height:771px;overflow:visible;background:#fff">
 <!-- tab header -->
 <div class="abs" style="left:0;top:-1px;width:1123px;height:30px;background:#f5f6fa;border-top:1px solid #fff;border-radius:5px 5px 0 0"></div>
 <div class="abs" style="left:0;top:-1px;width:180px;height:30px;background:linear-gradient(#d3deea,#eef2f8 55%,#fff 90%);border-radius:5px 6px 0 0"></div>
 <svg style="left:5px;top:7px" width="16" height="16"><use href="#i-ds"/></svg>
 <span class="abs" style="left:25px;top:5px;line-height:22px;white-space:nowrap;letter-spacing:0.163px">resource.datasetx</span>
 <svg style="left:161.500px;top:10px" width="10.500" height="10.500"><use href="#i-x"/></svg>
 <svg style="left:1075px;top:7px" width="10" height="4"><use href="#i-min"/></svg>
 <svg style="left:1098px;top:7px" width="10" height="10"><use href="#i-max"/></svg>
 <!-- path label -->
 <div class="abs" style="left:3px;top:31px;width:1117px;height:21px;background:#f5f6fa;border-bottom:1px solid #8c8c8c"></div>
 <span class="abs" style="left:3px;top:31px;line-height:22px;white-space:nowrap;letter-spacing:0.536px">com.primeton.gocom.afcenter.model/src/com/primeton/gocom/afcenter/model/resource.datasetx</span>
 <!-- palette -->
 <div class="abs" style="left:3px;top:52px;width:121px;height:29px;background:#f6f7fb;border-bottom:1px solid #9a9a9a"></div>
 <svg style="left:14px;top:62px" width="6" height="11" viewBox="0 0 6 11"><path d="M5.300 .8V10.200L.8 5.500z" fill="#fff" stroke="#7a7a7a" stroke-width=".9"/></svg>
 <svg style="left:35px;top:59px" width="15" height="16" viewBox="0 0 15 16"><ellipse cx="7.500" cy="7.500" rx="7" ry="7.500" fill="#f7f7fb" stroke="#c9cbd6" stroke-width=".8"/><circle cx="5" cy="4" r="1.500" fill="#f0c21a"/><circle cx="10" cy="4" r="1.500" fill="#58b02c"/><circle cx="3.500" cy="8" r="1.500" fill="#f08a1a"/><circle cx="11.500" cy="8" r="1.500" fill="#2c9a48"/><circle cx="5.500" cy="11.500" r="1.500" fill="#e0342a"/><circle cx="9.500" cy="11.500" r="1.500" fill="#2a6ad8"/></svg>
 <span class="abs" style="left:53px;top:57.500px;line-height:22px;letter-spacing:0.165px">Palette</span>
 <div class="abs" style="left:17px;top:84px;width:93px;height:24px;background:#cfe1f8;border-radius:2px"></div>
 <svg style="left:23px;top:86px" width="11" height="18" viewBox="0 0 11 18"><path d="M.8 .8V13.500L3.800 10.800L6 16L8 15.200L5.800 10.200H9.800z" fill="#fff" stroke="#4a4a4a" stroke-width=".9"/></svg>
 <span class="abs" style="left:38px;top:86px;line-height:22px;letter-spacing:0.126px">Select</span>
 <div class="abs" style="left:6px;top:112px;width:115px;height:1px;background:#8e8e8e"></div>
 <svg style="left:18px;top:116.300px" width="17" height="14" viewBox="0 0 17 14"><path d="M0 7.500H12" stroke="#0a66ff" stroke-width="1.200"/><path d="M11 3L16.500 7.500L11 12z" fill="#0a66ff"/></svg>
 <span class="tabtxt" style="left:38px;top:117.500px;letter-spacing:.3px">单向1:1关联</span>
 <svg style="left:18px;top:143.300px" width="17" height="14" viewBox="0 0 17 14"><path d="M0 7.500H12" stroke="#c414ac" stroke-width="1.200"/><path d="M11 3L16.500 7.500L11 12z" fill="#c414ac"/></svg>
 <span class="tabtxt" style="left:38px;top:144.500px;letter-spacing:.3px">单向1:n关联</span>
 <svg style="left:18px;top:170.300px" width="17" height="14" viewBox="0 0 17 14"><path d="M0 7.500H12" stroke="#5aaa14" stroke-width="1.200"/><path d="M11 3L16.500 7.500L11 12z" fill="#5aaa14"/></svg>
 <span class="tabtxt" style="left:38px;top:171.500px;letter-spacing:.3px">单向n:1关联</span>
 <svg style="left:18px;top:197.300px" width="17" height="14" viewBox="0 0 17 14"><path d="M0 7.500H16.500" stroke="#c414ac" stroke-width="1.200"/></svg>
 <span class="tabtxt" style="left:38px;top:198.500px;letter-spacing:.3px">双向1:n关联</span>
 <div class="abs" style="left:3px;top:226px;width:121px;height:1px;background:#9a9a9a"></div>
 <div class="abs" style="left:3px;top:227px;width:121px;height:24px;background:#f0f0f0"></div>
 <svg style="left:6px;top:232px" width="16" height="13" viewBox="0 0 16 13"><path d="M.6 12V2.500q0-1.500 1.500-1.500h3l1.200 1.500h5.200q1 0 1 1V5" fill="#fdf3d2" stroke="#c8923a"/><path d="M.8 12.400L3.500 5.500H15.400L12.500 12.400z" fill="#fbe3a4" stroke="#c8923a"/></svg>
 <span class="tabtxt" style="left:24px;top:228px">基本</span>
 <svg style="left:111px;top:235px" width="10" height="8" viewBox="0 0 10 8"><path d="M.5 4L3 1.500L5 4L3 6.500zM5 4L7 1.500L9.500 4L7 6.500z" fill="#fff" stroke="#7a7a7a" stroke-width=".7"/></svg>
 <svg style="left:19px;top:256px" width="17" height="17" viewBox="0 0 17 17"><rect x=".6" y=".6" width="13" height="11" fill="#fff" stroke="#2a5bd0" stroke-width="1.100"/><rect x="1" y="1" width="12.200" height="3" fill="#6aa0f0"/><path d="M1 7H13" stroke="#9bb8ea"/><rect x="7.500" y="7.500" width="8" height="9" rx="1" fill="#fff" stroke="#7a7a7a" stroke-width=".9"/><path d="M9.500 10h4M9.500 12h4M9.500 14h4" stroke="#2a8a6a" stroke-width=".9"/></svg>
 <span class="tabtxt" style="left:38px;top:255px">实体</span>
 <svg style="left:19px;top:283px" width="17" height="17" viewBox="0 0 17 17"><rect x=".6" y=".6" width="13" height="11" fill="#fff" stroke="#4f9a1f" stroke-width="1.100"/><rect x="1" y="1" width="12.200" height="3" fill="#8fd04a"/><path d="M1 7H13" stroke="#b3dc8c"/><rect x="8.500" y="7" width="7.500" height="9.500" rx="2.500" fill="url(#gcyl)" stroke="#d08a12" stroke-width=".9"/><ellipse cx="12.200" cy="8.600" rx="3.200" ry="1.300" fill="#fde7a6"/></svg>
 <span class="tabtxt" style="left:38px;top:282px">持久化实体</span>
 <svg style="left:19px;top:310px" width="17" height="17" viewBox="0 0 17 17"><rect x="1.100" y="1.100" width="11.500" height="9.500" rx="1" fill="#fff" stroke="#8a2ab8" stroke-width="1.200"/><rect x="1.500" y="1.500" width="10.700" height="2.500" fill="#b86ad8"/><path d="M2 6.500H12" stroke="#d3a6e6"/><circle cx="8.500" cy="8.500" r="2.800" fill="#d6ecfa" stroke="#7a8a9a" stroke-width=".9"/><path d="M10.500 10.500L14.500 14.200" stroke="#c8901c" stroke-width="1.800"/></svg>
 <span class="tabtxt" style="left:38px;top:309px">查询实体</span>
 <svg style="left:19px;top:337px" width="17" height="17" viewBox="0 0 17 17"><path d="M.7 2.700H13.300V11L10 15.300H.7z" fill="#fbe48a" stroke="#b8902a" stroke-width="1.100"/><path d="M13.300 11H10V15.300" fill="#f4d460" stroke="#b8902a" stroke-width=".9"/><path d="M5.500 10L13.500 1.500L15 3L7 11.500L5 12z" fill="#fff" stroke="#6a5a4a" stroke-width=".8"/><path d="M13.500 1.500L14.500 .5L16 2L15 3z" fill="#e0483a"/></svg>
 <span class="tabtxt" style="left:38px;top:336px">注释</span>
 <!-- rulers -->
 <div class="abs" style="left:126px;top:52px;width:994px;height:19px;background:#fff;border-bottom:1px solid #9a9a9a"></div>
 <div class="abs" style="left:126px;top:52px;width:19px;height:719px;background:#fff;border-left:1px solid #9a9a9a;border-right:1px solid #9a9a9a"></div>
 <div class="abs" style="left:127px;top:52px;width:17px;height:18px;background:#f0f2f9"></div>
<svg style="left:145px;top:52px;overflow:hidden" width="975" height="18" viewBox="0 0 975 18">
<path d="M15.5 8v2M30.5 8v2M45.5 8v2M60.5 7v5M75.5 8v2M90.5 8v2M105.5 8v2M135.5 8v2M150.5 8v2M165.5 8v2M180.5 7v5M195.5 8v2M210.5 8v2M225.5 8v2M255.5 8v2M270.5 8v2M285.5 8v2M300.5 7v5M315.5 8v2M330.5 8v2M345.5 8v2M375.5 8v2M390.5 8v2M405.5 8v2M420.5 7v5M435.5 8v2M450.5 8v2M465.5 8v2M495.5 8v2M510.5 8v2M525.5 8v2M540.5 7v5M555.5 8v2M570.5 8v2M585.5 8v2M615.5 8v2M630.5 8v2M645.5 8v2M660.5 7v5M675.5 8v2M690.5 8v2M705.5 8v2M735.5 8v2M750.5 8v2M765.5 8v2M780.5 7v5M795.5 8v2M810.5 8v2M825.5 8v2M855.5 8v2M870.5 8v2M885.5 8v2M900.5 7v5M915.5 8v2M930.5 8v2M945.5 8v2" stroke="#000" stroke-width="1" fill="none"/>
<text x="0" y="12.600" font-size="13.500" text-anchor="middle" letter-spacing="0" font-family="Liberation Sans,sans-serif">0</text>
<text x="120" y="12.600" font-size="13.500" text-anchor="middle" letter-spacing="0" font-family="Liberation Sans,sans-serif">1</text>
<text x="240" y="12.600" font-size="13.500" text-anchor="middle" letter-spacing="0" font-family="Liberation Sans,sans-serif">2</text>
<text x="360" y="12.600" font-size="13.500" text-anchor="middle" letter-spacing="0" font-family="Liberation Sans,sans-serif">3</text>
<text x="480" y="12.600" font-size="13.500" text-anchor="middle" letter-spacing="0" font-family="Liberation Sans,sans-serif">4</text>
<text x="600" y="12.600" font-size="13.500" text-anchor="middle" letter-spacing="0" font-family="Liberation Sans,sans-serif">5</text>
<text x="720" y="12.600" font-size="13.500" text-anchor="middle" letter-spacing="0" font-family="Liberation Sans,sans-serif">6</text>
<text x="840" y="12.600" font-size="13.500" text-anchor="middle" letter-spacing="0" font-family="Liberation Sans,sans-serif">7</text>
<text x="960" y="12.600" font-size="13.500" text-anchor="middle" letter-spacing="0" font-family="Liberation Sans,sans-serif">8</text>
</svg>
<svg style="left:127px;top:71px;overflow:hidden" width="17" height="700" viewBox="0 0 17 700">
<path d="M7 15.5h2M7 30.5h2M7 45.5h2M6 60.5h5M7 75.5h2M7 90.5h2M7 105.5h2M7 135.5h2M7 150.5h2M7 165.5h2M6 180.5h5M7 195.5h2M7 210.5h2M7 225.5h2M7 255.5h2M7 270.5h2M7 285.5h2M6 300.5h5M7 315.5h2M7 330.5h2M7 345.5h2M7 375.5h2M7 390.5h2M7 405.5h2M6 420.5h5M7 435.5h2M7 450.5h2M7 465.5h2M7 495.5h2M7 510.5h2M7 525.5h2M6 540.5h5M7 555.5h2M7 570.5h2M7 585.5h2M7 615.5h2M7 630.5h2M7 645.5h2M6 660.5h5M7 675.5h2M7 690.5h2" stroke="#000" stroke-width="1" fill="none"/>
<text transform="translate(16.500,0) rotate(-90)" x="0" y="0" font-size="13.500" text-anchor="middle" letter-spacing="0" font-family="Liberation Sans,sans-serif">0</text>
<text transform="translate(16.500,120) rotate(-90)" x="0" y="0" font-size="13.500" text-anchor="middle" letter-spacing="0" font-family="Liberation Sans,sans-serif">1</text>
<text transform="translate(16.500,240) rotate(-90)" x="0" y="0" font-size="13.500" text-anchor="middle" letter-spacing="0" font-family="Liberation Sans,sans-serif">2</text>
<text transform="translate(16.500,360) rotate(-90)" x="0" y="0" font-size="13.500" text-anchor="middle" letter-spacing="0" font-family="Liberation Sans,sans-serif">3</text>
<text transform="translate(16.500,480) rotate(-90)" x="0" y="0" font-size="13.500" text-anchor="middle" letter-spacing="0" font-family="Liberation Sans,sans-serif">4</text>
<text transform="translate(16.500,600) rotate(-90)" x="0" y="0" font-size="13.500" text-anchor="middle" letter-spacing="0" font-family="Liberation Sans,sans-serif">5</text>
</svg>
 <!-- canvas -->
<div class="ent" style="left:250px;top:176px;height:317px">
<svg style="left:29px;top:13px" width="13" height="11"><use href="#i-pent"/></svg>
<span class="et" style="left:49px;top:7.500px;letter-spacing:-0.175px">ResGroup</span>
<i class="dot"></i>
<svg style="left:3px;top:34px" width="15" height="14"><use href="#i-key"/></svg>
<span class="ea" style="top:31px;letter-spacing:0.241px">id  :String</span>
<svg style="left:6px;top:58px" width="10" height="11"><use href="#i-attr"/></svg>
<span class="ea" style="top:53px;letter-spacing:0.07px">name  :String</span>
<svg style="left:6px;top:80px" width="10" height="11"><use href="#i-attr"/></svg>
<span class="ea" style="top:75px;letter-spacing:0.264px">code  :String</span>
<svg style="left:6px;top:102px" width="10" height="11"><use href="#i-attr"/></svg>
<span class="ea" style="top:97px;letter-spacing:0.202px">types  :String</span>
<svg style="left:6px;top:124px" width="10" height="11"><use href="#i-attr"/></svg>
<span class="ea" style="top:119px;letter-spacing:0.164px">resType  :String</span>
<svg style="left:6px;top:146px" width="10" height="11"><use href="#i-attr"/></svg>
<span class="ea" style="top:141px;letter-spacing:0.185px">description  :St...</span>
<svg style="left:6px;top:168px" width="10" height="11"><use href="#i-attr"/></svg>
<span class="ea" style="top:163px;letter-spacing:0.256px">appId  :String</span>
<svg style="left:6px;top:190px" width="10" height="11"><use href="#i-attr"/></svg>
<span class="ea" style="top:185px;letter-spacing:-0.066px">businessObjId  ...</span>
<svg style="left:6px;top:212px" width="10" height="11"><use href="#i-attr"/></svg>
<span class="ea" style="top:207px;letter-spacing:0.221px">tenantId  :String</span>
<svg style="left:6px;top:234px" width="10" height="11"><use href="#i-attr"/></svg>
<span class="ea" style="top:229px;letter-spacing:0.068px">createTime  :Ti...</span>
<svg style="left:6px;top:256px" width="10" height="11"><use href="#i-attr"/></svg>
<span class="ea" style="top:251px;letter-spacing:0.151px">updateTime  :T...</span>
<svg style="left:6px;top:278px" width="10" height="11"><use href="#i-attr"/></svg>
<span class="ea" style="top:273px;letter-spacing:-0.027px">createUser  :Str...</span>
<svg style="left:6px;top:300px" width="10" height="11"><use href="#i-attr"/></svg>
<span class="ea" style="top:295px;letter-spacing:-0.06px">updateUser  :St...</span>
</div>
<div class="ent" style="left:550px;top:174px;height:317px">
<svg style="left:31px;top:13px" width="13" height="11"><use href="#i-pent"/></svg>
<span class="et" style="left:51px;top:7.500px;letter-spacing:-0.041px">Resource</span>
<i class="dot"></i>
<svg style="left:3px;top:34px" width="15" height="14"><use href="#i-key"/></svg>
<span class="ea" style="top:31px;letter-spacing:0.241px">id  :String</span>
<svg style="left:6px;top:58px" width="10" height="11"><use href="#i-attr"/></svg>
<span class="ea" style="top:53px;letter-spacing:0.07px">name  :String</span>
<svg style="left:6px;top:80px" width="10" height="11"><use href="#i-attr"/></svg>
<span class="ea" style="top:75px;letter-spacing:0.264px">code  :String</span>
<svg style="left:6px;top:102px" width="10" height="11"><use href="#i-attr"/></svg>
<span class="ea" style="top:97px;letter-spacing:0.202px">types  :String</span>
<svg style="left:6px;top:124px" width="10" height="11"><use href="#i-attr"/></svg>
<span class="ea" style="top:119px;letter-spacing:0.256px">appId  :String</span>
<svg style="left:6px;top:146px" width="10" height="11"><use href="#i-attr"/></svg>
<span class="ea" style="top:141px;letter-spacing:-0.049px">resGroupId  :St...</span>
<svg style="left:6px;top:168px" width="10" height="11"><use href="#i-attr"/></svg>
<span class="ea" style="top:163px;letter-spacing:0.112px">subType  :String</span>
<svg style="left:6px;top:190px" width="10" height="11"><use href="#i-attr"/></svg>
<span class="ea" style="top:185px;letter-spacing:0.185px">description  :St...</span>
<svg style="left:6px;top:212px" width="10" height="11"><use href="#i-attr"/></svg>
<span class="ea" style="top:207px;letter-spacing:-0.066px">businessObjId  ...</span>
<svg style="left:6px;top:234px" width="10" height="11"><use href="#i-attr"/></svg>
<span class="ea" style="top:229px;letter-spacing:0.258px">content  :String</span>
<svg style="left:6px;top:256px" width="10" height="11"><use href="#i-attr"/></svg>
<span class="ea" style="top:251px;letter-spacing:0.221px">tenantId  :String</span>
<svg style="left:6px;top:278px" width="10" height="11"><use href="#i-attr"/></svg>
<span class="ea" style="top:273px;letter-spacing:0.068px">createTime  :Ti...</span>
<svg style="left:6px;top:300px" width="10" height="11"><use href="#i-attr"/></svg>
<span class="ea" style="top:295px;letter-spacing:0.151px">updateTime  :T...</span>
</div>
<div class="ent" style="left:880px;top:176px;height:427px">
<svg style="left:44px;top:13px" width="13" height="11"><use href="#i-pent"/></svg>
<span class="et" style="left:64px;top:7.500px;letter-spacing:0.556px">Menu</span>
<i class="dot"></i>
<svg style="left:3px;top:34px" width="15" height="14"><use href="#i-key"/></svg>
<span class="ea" style="top:31px;letter-spacing:0.241px">id  :String</span>
<svg style="left:6px;top:58px" width="10" height="11"><use href="#i-attr"/></svg>
<span class="ea" style="top:53px;letter-spacing:0.07px">name  :String</span>
<svg style="left:6px;top:80px" width="10" height="11"><use href="#i-attr"/></svg>
<span class="ea" style="top:75px;letter-spacing:0.264px">code  :String</span>
<svg style="left:6px;top:102px" width="10" height="11"><use href="#i-attr"/></svg>
<span class="ea" style="top:97px;letter-spacing:0.061px">resId  :String</span>
<svg style="left:6px;top:124px" width="10" height="11"><use href="#i-attr"/></svg>
<span class="ea" style="top:119px;letter-spacing:0.185px">description  :St...</span>
<svg style="left:6px;top:146px" width="10" height="11"><use href="#i-attr"/></svg>
<span class="ea" style="top:141px;letter-spacing:0.15px">sortNo  :Decimal</span>
<svg style="left:6px;top:168px" width="10" height="11"><use href="#i-attr"/></svg>
<span class="ea" style="top:163px;letter-spacing:-0.081px">isLeaf  :String</span>
<svg style="left:6px;top:190px" width="10" height="11"><use href="#i-attr"/></svg>
<span class="ea" style="top:185px;letter-spacing:0.146px">treeLevel  :Int</span>
<svg style="left:6px;top:212px" width="10" height="11"><use href="#i-attr"/></svg>
<span class="ea" style="top:207px;letter-spacing:0.097px">seq  :String</span>
<svg style="left:6px;top:234px" width="10" height="11"><use href="#i-attr"/></svg>
<span class="ea" style="top:229px;letter-spacing:0.26px">parentId  :String</span>
<svg style="left:6px;top:256px" width="10" height="11"><use href="#i-attr"/></svg>
<span class="ea" style="top:251px;letter-spacing:0.221px">tenantId  :String</span>
<svg style="left:6px;top:278px" width="10" height="11"><use href="#i-attr"/></svg>
<span class="ea" style="top:273px;letter-spacing:0.068px">createTime  :Ti...</span>
<svg style="left:6px;top:300px" width="10" height="11"><use href="#i-attr"/></svg>
<span class="ea" style="top:295px;letter-spacing:0.151px">updateTime  :T...</span>
<svg style="left:6px;top:322px" width="10" height="11"><use href="#i-attr"/></svg>
<span class="ea" style="top:317px;letter-spacing:-0.027px">createUser  :Str...</span>
<svg style="left:6px;top:344px" width="10" height="11"><use href="#i-attr"/></svg>
<span class="ea" style="top:339px;letter-spacing:-0.06px">updateUser  :St...</span>
<svg style="left:6px;top:366px" width="10" height="11"><use href="#i-attr"/></svg>
<span class="ea" style="top:361px;letter-spacing:-0.014px">isFixed  :String</span>
<svg style="left:6px;top:388px" width="10" height="11"><use href="#i-attr"/></svg>
<span class="ea" style="top:383px;letter-spacing:0.12px">openType  :Stri...</span>
<svg style="left:6px;top:410px" width="10" height="11"><use href="#i-attr"/></svg>
<span class="ea" style="top:405px;letter-spacing:0.004px">menuIcon  :Stri...</span>
</div>
<svg style="left:0;top:0" width="1123" height="771" viewBox="472 60 1123 771"><path d="M872 394.500L1022 393.500M1011 388.300L1022 393.500L1011 399" fill="none" stroke="#c81cb0" stroke-width="1.100"/><path d="M1352 436.5L1172 405.500M1184 402L1172 405.500L1182 412.500" fill="none" stroke="#68a81c" stroke-width="1.100"/></svg>
<span class="lb" style="left:526px;top:309px;color:#c414ac">n</span><span class="lb" style="left:414px;top:336px;color:#c414ac">1</span>
<span class="lb" style="left:714px;top:322px;color:#6aaa1e">1</span><span class="lb" style="left:855px;top:377px;color:#6aaa1e">n</span>
</div>

<div class="panel" style="left:1599px;top:60px;width:157px;height:771px;overflow:visible;background:#fff">
 <div class="abs" style="left:0;top:-1px;width:157px;height:30px;background:#f5f6fa;border-top:1px solid #fff;border-radius:5px 0 0 0"></div>
 <div class="abs" style="left:0;top:-1px;width:87px;height:30px;background:linear-gradient(#d3deea,#eef2f8 55%,#fff 90%);border-radius:5px 6px 0 0"></div>
 <svg style="left:6px;top:7px" width="17" height="16" viewBox="0 0 17 16"><path d="M4.500 1h7v2h-7z" fill="#fdf3d2" stroke="#c8923a" stroke-width=".9"/><path d="M5 3.500Q1.500 6 2 11.500H6V8.500L9 6.500L11.500 8V5Q11 4 10.500 3.500" fill="#f4f8fc" stroke="#7a8aa8" stroke-width=".9"/><rect x=".5" y="10.500" width="8" height="2.200" fill="#3a9a4a"/><rect x=".5" y="12.700" width="8" height="2.300" fill="#d05a2a"/><path d="M9.500 7.500H14L16 9.500V15.500H9.500z" fill="#fff" stroke="#d0a040" stroke-width=".9"/><path d="M11.500 11h3M11.500 13h3" stroke="#3a6ac8" stroke-width=".9"/></svg>
 <span class="tabtxt" style="left:25px;top:5px">构...</span>
 <svg style="left:68px;top:10px" width="11" height="11"><use href="#i-x"/></svg>
 <svg style="left:89px;top:6px" width="18" height="18" viewBox="0 0 18 18" opacity=".55"><circle cx="3.500" cy="3.500" r="2.500" fill="#5ab05a" stroke="#3a8a3a" stroke-width=".6"/><path d="M3.500 3.500L6 14L15 7.500z" fill="#d8dce8" opacity=".6"/><rect x="6.500" y="7.500" width="9" height="7" rx="1" fill="#b8d0f0" stroke="#8a9ab8"/><rect x="8" y="9" width="6" height="4" fill="#7aa6e0"/><path d="M8 16.500h6M11 14.500v2" stroke="#8a9ab8" stroke-width="1.200"/></svg>
 <span class="tabtxt" style="left:110px;top:5px;color:#a8a8b0">业...</span>
 <div class="abs" style="left:8px;top:58px;width:150px;height:26px;border:1px solid #7a7a7a;background:#fff"></div>
 <div class="abs" style="left:8px;top:93px;width:150px;height:690px;border:1px solid #8a8a8a;background:#fff"></div>
 <svg style="left:18px;top:102px" width="6" height="10" viewBox="0 0 6 10"><path d="M.7 .8 L4.800 5 L.7 9.200" fill="none" stroke="#a6a6a6" stroke-width="1.300"/></svg>
 <svg style="left:33px;top:98px" width="16" height="16"><use href="#i-projq"/></svg>
 <span class="abs" style="left:54px;top:96px;line-height:22px;white-space:nowrap;letter-spacing:.52px">com.primeton.gocom</span>
</div>

</body></html>
